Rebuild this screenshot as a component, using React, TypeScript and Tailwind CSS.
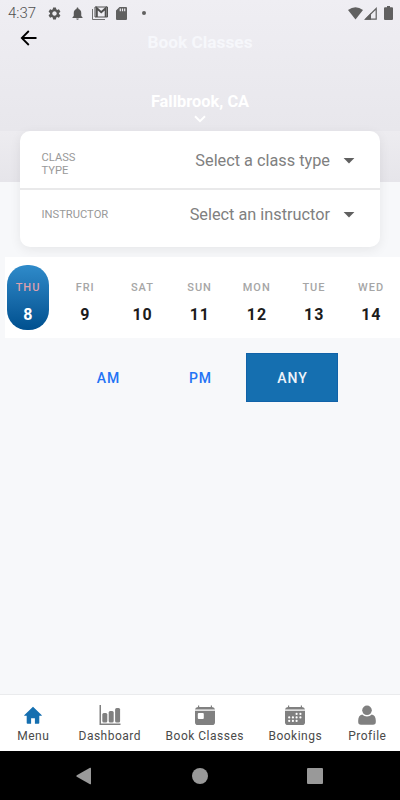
import React, { useState } from 'react';
import { MdNotifications, MdSettings } from 'react-icons/md';

const days = [
  { name: 'THU', date: 8 },
  { name: 'FRI', date: 9 },
  { name: 'SAT', date: 10 },
  { name: 'SUN', date: 11 },
  { name: 'MON', date: 12 },
  { name: 'TUE', date: 13 },
  { name: 'WED', date: 14 },
];

const periods = ['AM', 'PM', 'ANY'];

const HomeIcon = () => (
  <svg width="20" height="22" viewBox="0 0 20 22" fill="#156fb0">
    <path d="M10 2.800 1.200 11.200q-.3.600.5.600h2v7.200q0 .8.800.8h3.600v-5.600h3.800v5.600h3.600q.8 0 .8-.8v-7.200h2q.8 0 .5-.6z" />
  </svg>
);

const ChartIcon = () => (
  <svg width="22" height="22" viewBox="0 0 22 22" fill="#808080">
    <path d="M.5 1H2v18.500h19.500V21H.5z" />
    <rect x="3.300" y="9" width="5" height="9.500" rx="1.500" />
    <rect x="9.700" y="7" width="5" height="11.500" rx="1.500" />
    <rect x="16.100" y="4" width="5" height="14.500" rx="1.500" />
  </svg>
);

const CalendarDayIcon = () => (
  <svg width="22" height="22" viewBox="0 0 22 22" fill="#808080">
    <path d="M4 1.600h1.200V3h11.600V1.600H18V3a3 3 0 0 1 3 2.600H1A3 3 0 0 1 4 3z" />
    <path fillRule="evenodd" d="M1 6.800h20v11.400a2.800 2.800 0 0 1-2.800 2.800H3.800A2.800 2.800 0 0 1 1 18.200zM4.800 9a1 1 0 0 0-1 1v4a1 1 0 0 0 1 1h4a1 1 0 0 0 1-1v-4a1 1 0 0 0-1-1z" />
  </svg>
);

const CalendarGridIcon = () => (
  <svg width="22" height="22" viewBox="0 0 22 22" fill="#808080">
    <path d="M4 1.600h1.200V3h11.600V1.600H18V3a3 3 0 0 1 3 2.600H1A3 3 0 0 1 4 3z" />
    <path d="M1 6.800h20v11.400a2.800 2.800 0 0 1-2.800 2.800H3.800A2.800 2.800 0 0 1 1 18.200z" />
    <g fill="#fff">
      <circle cx="12.600" cy="9.900" r="1.100" />
      <circle cx="16.400" cy="9.900" r="1.100" />
      <circle cx="5.200" cy="13.400" r="1.100" />
      <circle cx="8.900" cy="13.400" r="1.100" />
      <circle cx="12.600" cy="13.400" r="1.100" />
      <circle cx="16.400" cy="13.400" r="1.100" />
      <circle cx="5.200" cy="16.900" r="1.100" />
      <circle cx="8.900" cy="16.900" r="1.100" />
      <circle cx="12.600" cy="16.900" r="1.100" />
    </g>
  </svg>
);

const PersonIcon = () => (
  <svg width="22" height="22" viewBox="0 0 22 22" fill="#808080">
    <circle cx="11" cy="6.300" r="4.800" />
    <path d="M6.200 10.400a6.600 6.600 0 0 0 9.600 0c2.800.6 4 3 4 6V18a2.800 2.800 0 0 1-2.800 2.800H5A2.800 2.800 0 0 1 2.200 18v-1.600c0-3 1.200-5.400 4-6z" />
  </svg>
);

const tabs = [
  { label: 'Menu', icon: HomeIcon, width: 'w-[66px]' },
  { label: 'Dashboard', icon: ChartIcon, width: 'w-[87px]' },
  { label: 'Book Classes', icon: CalendarDayIcon, width: 'w-[103px]' },
  { label: 'Bookings', icon: CalendarGridIcon, width: 'w-[78px]' },
  { label: 'Profile', icon: PersonIcon, width: 'w-[66px]' },
];

const StatusBar = () => (
  <div className="flex h-[26px] items-center pl-2 pr-[7px] text-[#585858]">
    <span className="w-[39px] text-[15px] font-light leading-none text-[#505050]">4:37</span>
    <MdSettings size={15} />
    <MdNotifications size={15} className="ml-2" />
    <svg width="16" height="14" viewBox="0 0 16 14" className="ml-[7px]" fill="none" stroke="#505050">
      <path d="M.5 3v10.500H13" strokeWidth=".8" />
      <path d="M3 1h12.500v10H3z" />
      <path d="M4.800 11V2.200l4.450 4 4.450-4V11" strokeWidth="2" />
    </svg>
    <svg width="11" height="13" viewBox="0 0 11 13" className="ml-2" fill="#606060">
      <path fillRule="evenodd" d="M3.500 0H10a1 1 0 0 1 1 1v11a1 1 0 0 1-1 1H1a1 1 0 0 1-1-1V3.500zM3.700 1.600v2.600h1.200V1.600zm2.200 0v2.600h1.200V1.600zm2.200 0v2.600h1.200V1.600z" />
    </svg>
    <span className="ml-[15px] h-1 w-1 rounded-full bg-[#606060]" />
    <svg width="15" height="13" viewBox="0 0 15 13" className="ml-auto" fill="#606060">
      <path d="M0 3Q7.500-2.600 15 3L7.500 12.500z" />
    </svg>
    <svg width="13" height="13" viewBox="0 0 13 13" className="ml-[1px]">
      <path d="M1.500 12.200 12.200 1.500v10.700z" fill="none" stroke="#606060" strokeWidth="1.200" />
      <path d="M.5 12.800 7 6v6.800z" fill="#606060" />
    </svg>
    <svg width="9" height="14" viewBox="0 0 9 14" className="ml-[7px]" fill="#606060">
      <path d="M3 0h3v1.300h2a1 1 0 0 1 1 1V13a1 1 0 0 1-1 1H1a1 1 0 0 1-1-1V2.300a1 1 0 0 1 1-1h2z" />
    </svg>
  </div>
);

const Caret = () => (
  <svg width="12" height="6" viewBox="0 0 12 6" className="ml-[13px]">
    <path d="M.6 0h10.800L6 5.600z" fill="#606060" />
  </svg>
);

export default function App() {
  const [day, setDay] = useState(8);
  const [period, setPeriod] = useState('ANY');

  return (
    <div className="flex h-[800px] w-[400px] flex-col overflow-hidden bg-[#f7f8fa] font-['Roboto',sans-serif]">
      <header className="h-[131px] shrink-0 bg-linear-to-b from-[#efeef3] to-[#e8e7ec]">
        <StatusBar />
        <div className="grid h-[33px] grid-cols-[1fr_auto_1fr] items-center">
          <button className="ml-5 mt-[-9px] w-[18px] text-black">
            <svg width="17" height="16" viewBox="0 0 17 16" fill="none" stroke="currentColor" strokeWidth="1.800">
              <path d="M16.500 8H2M8.800 1 1.800 8l7 7" />
            </svg>
          </button>
          <h1 className="pt-px text-[17.300px] font-bold leading-none text-[#f6f7fb]">Book Classes</h1>
        </div>
        <div className="mt-[34px] flex flex-col items-center text-white">
          <div className="text-[16.400px] font-bold leading-[17px]">Fallbrook, CA</div>
          <svg width="12" height="8" viewBox="0 0 12 8" className="mt-[5px]">
            <path d="m1 1.200 5 5 5-5" fill="none" stroke="#fff" strokeWidth="2" />
          </svg>
        </div>
      </header>

      <div className="h-[51px] shrink-0 bg-linear-to-b from-[#edecf0] to-[#e6e5ea]" />

      <div className="mx-5 mt-[-51px] h-[116px] shrink-0 rounded-[10px] bg-white shadow-[0_3px_12px_rgba(0,0,0,0.07)]">
        <button className="flex h-[59px] w-full items-center border-b-2 border-[#e9e9ea] pl-[21.500px] pr-[25px] pt-[3px]">
          <span className="mt-[5px] w-[60px] text-left text-[11.200px] leading-[13px] text-[#999]">CLASS TYPE</span>
          <span className="ml-auto text-[16.300px] text-[#808080]">Select a class type</span>
          <Caret />
        </button>
        <button className="flex h-[50px] w-full items-center pl-[21.500px] pr-[25px]">
          <span className="text-[11.200px] text-[#999]">INSTRUCTOR</span>
          <span className="ml-auto text-[16.300px] text-[#808080]">Select an instructor</span>
          <Caret />
        </button>
      </div>

      <div className="ml-[5px] mt-[10px] flex h-[81px] shrink-0 items-center bg-white">
        <div className="ml-[-5.600px] flex">
          {days.map((d) => (
            <div key={d.date} className="flex w-[57.200px] justify-center">
              <button
                onClick={() => setDay(d.date)}
                className={`flex h-[65px] w-[42px] flex-col items-center rounded-[20px] pt-[16px] ${
                  day === d.date ? 'bg-linear-to-b from-[#2f8bca] to-[#00508f] text-white' : 'text-[#1c1c1c]'
                }`}
              >
                <span className={`text-[11px] font-medium leading-[13px] tracking-[1px] ${day === d.date ? 'text-[#dda0ad]' : 'text-[#a6a6a6]'}`}>
                  {d.name}
                </span>
                <span className="mt-3 pl-[0.500px] text-base font-bold leading-[18px] tracking-[1px]">{d.date}</span>
              </button>
            </div>
          ))}
        </div>
      </div>

      <div className="mt-[15px] flex shrink-0 justify-center">
        {periods.map((p) => (
          <button
            key={p}
            onClick={() => setPeriod(p)}
            className={`h-[49px] w-[92px] pl-px text-sm font-medium tracking-[1px] ${
              period === p ? 'border border-[#1162a8] bg-[#156fb0] text-[#eef3fa]' : 'text-[#2473f5]'
            }`}
          >
            {p}
          </button>
        ))}
      </div>

      <nav className="mt-auto flex h-[57px] shrink-0 border-t border-[#eaebed] bg-white pt-[9px]">
        {tabs.map((tab) => (
          <button key={tab.label} className={`flex flex-col items-center ${tab.width}`}>
            <tab.icon />
            <span className="mt-[3px] whitespace-nowrap pl-[0.600px] text-xs leading-[15px] tracking-[0.500px] text-[#4a4a4a]">{tab.label}</span>
          </button>
        ))}
      </nav>

      <div className="flex h-[49px] shrink-0 items-center bg-black pl-[76px]">
        <svg width="15" height="18" viewBox="0 0 15 18" fill="#999">
          <path d="M14 .8q1-.5 1 .7v15q0 1.200-1 .7L.8 9.800q-1-.8 0-1.600z" />
        </svg>
        <span className="ml-[101px] h-4 w-4 rounded-full bg-[#999]" />
        <span className="ml-[99px] h-4 w-4 rounded-[1px] bg-[#999]" />
      </div>
    </div>
  );
}
